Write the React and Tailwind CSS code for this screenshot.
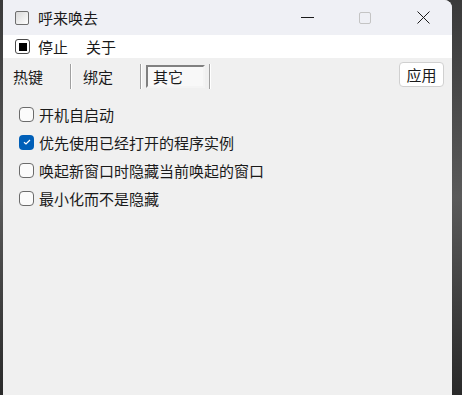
const FONT = "font-['Noto_Sans_CJK_SC','Noto_Sans',sans-serif]"

const options = [
  { label: '开机自启动', checked: false },
  { label: '优先使用已经打开的程序实例', checked: true },
  { label: '唤起新窗口时隐藏当前唤起的窗口', checked: false },
  { label: '最小化而不是隐藏', checked: false },
]

function Checkbox({ checked }) {
  if (checked) {
    return (
      <span className="w-[15px] h-[15px] rounded-[4px] bg-[#005fb8] flex items-center justify-center shrink-0">
        <svg width="8" height="6" viewBox="0 0 8 6" fill="none">
          <path d="M1 3.2 L3 5 L7 1" stroke="white" strokeWidth="1.2" />
        </svg>
      </span>
    )
  }
  return <span className="w-[15px] h-[15px] rounded-[4px] border border-[#6b6b6b] bg-[#fbfbfb] shrink-0" />
}

function Separator() {
  return <div className="h-[25px] w-[2px] border-l border-l-[#a0a0a0] border-r border-r-white" />
}

export default function App() {
  return (
    <div className={`w-[462px] h-[395px] overflow-hidden flex bg-gradient-to-b from-[#3a3a3a] via-[#5a5a5a] to-[#2a2a2a] ${FONT}`}>
      <div className="ml-[3px] w-[449px] h-full flex flex-col bg-[#f0f0f0] rounded-tr-[8px] overflow-hidden text-[#1a1a1a]">
        {/* Title bar */}
        <div className="h-[35px] bg-[#eff0f5] flex items-center shrink-0">
          <span className="ml-[12px] w-[14px] h-[14px] rounded-[2px] border border-[#6e6e6e] bg-gradient-to-br from-[#d8d8d8] to-white shrink-0" />
          <span className="ml-[9px] text-[15px] leading-none">呼来唤去</span>
          <div className="ml-auto flex h-full">
            <div className="w-[58px] flex items-center justify-center">
              <div className="w-[13px] h-px bg-[#1a1a1a]" />
            </div>
            <div className="w-[58px] flex items-center justify-center">
              <div className="w-[12px] h-[12px] rounded-[2px] border border-[#c4c4c4]" />
            </div>
            <div className="w-[58px] flex items-center justify-center">
              <svg width="13" height="13" viewBox="0 0 13 13">
                <path d="M0.5 0.5 L12.5 12.5 M12.5 0.5 L0.5 12.5" stroke="#1a1a1a" strokeWidth="1" />
              </svg>
            </div>
          </div>
        </div>

        {/* Menu bar */}
        <div className="h-[23px] bg-white flex items-center shrink-0">
          <span className="ml-[12px] w-[15px] h-[15px] rounded-[3px] border border-[#4a4a4a] bg-white flex items-center justify-center shrink-0">
            <span className="w-[8px] h-[8px] bg-black" />
          </span>
          <span className="ml-[8px] text-[15px] leading-none">停止</span>
          <span className="ml-[18px] text-[15px] leading-none">关于</span>
        </div>

        {/* Toolbar */}
        <div className="h-[36px] flex items-center shrink-0">
          <span className="ml-[10px] text-[15px] leading-none">热键</span>
          <div className="ml-[27px]"><Separator /></div>
          <span className="ml-[11px] text-[15px] leading-none">绑定</span>
          <div className="ml-[27px]"><Separator /></div>
          <div className="ml-[4px] w-[59px] h-[23px] border-2 border-t-[#808080] border-l-[#808080] border-b-[#f4f4f4] border-r-[#f4f4f4] bg-[#f8f8f8] flex items-center pl-[5px]">
            <span className="text-[15px] leading-none">其它</span>
          </div>
          <div className="ml-[4px]"><Separator /></div>
          <button className="ml-auto mr-[8px] self-start mt-[4px] w-[45px] h-[25px] rounded-[4px] border border-[#d0d0d0] bg-white flex items-center justify-center text-[15px] leading-none">
            应用
          </button>
        </div>

        {/* Options */}
        <div className="pt-[6px] flex flex-col">
          {options.map((o) => (
            <div key={o.label} className="h-[28px] flex items-center pl-[16px] gap-[5px]">
              <Checkbox checked={o.checked} />
              <span className="text-[15px] leading-none">{o.label}</span>
            </div>
          ))}
        </div>
      </div>
      <div className="flex-1" />
    </div>
  )
}
